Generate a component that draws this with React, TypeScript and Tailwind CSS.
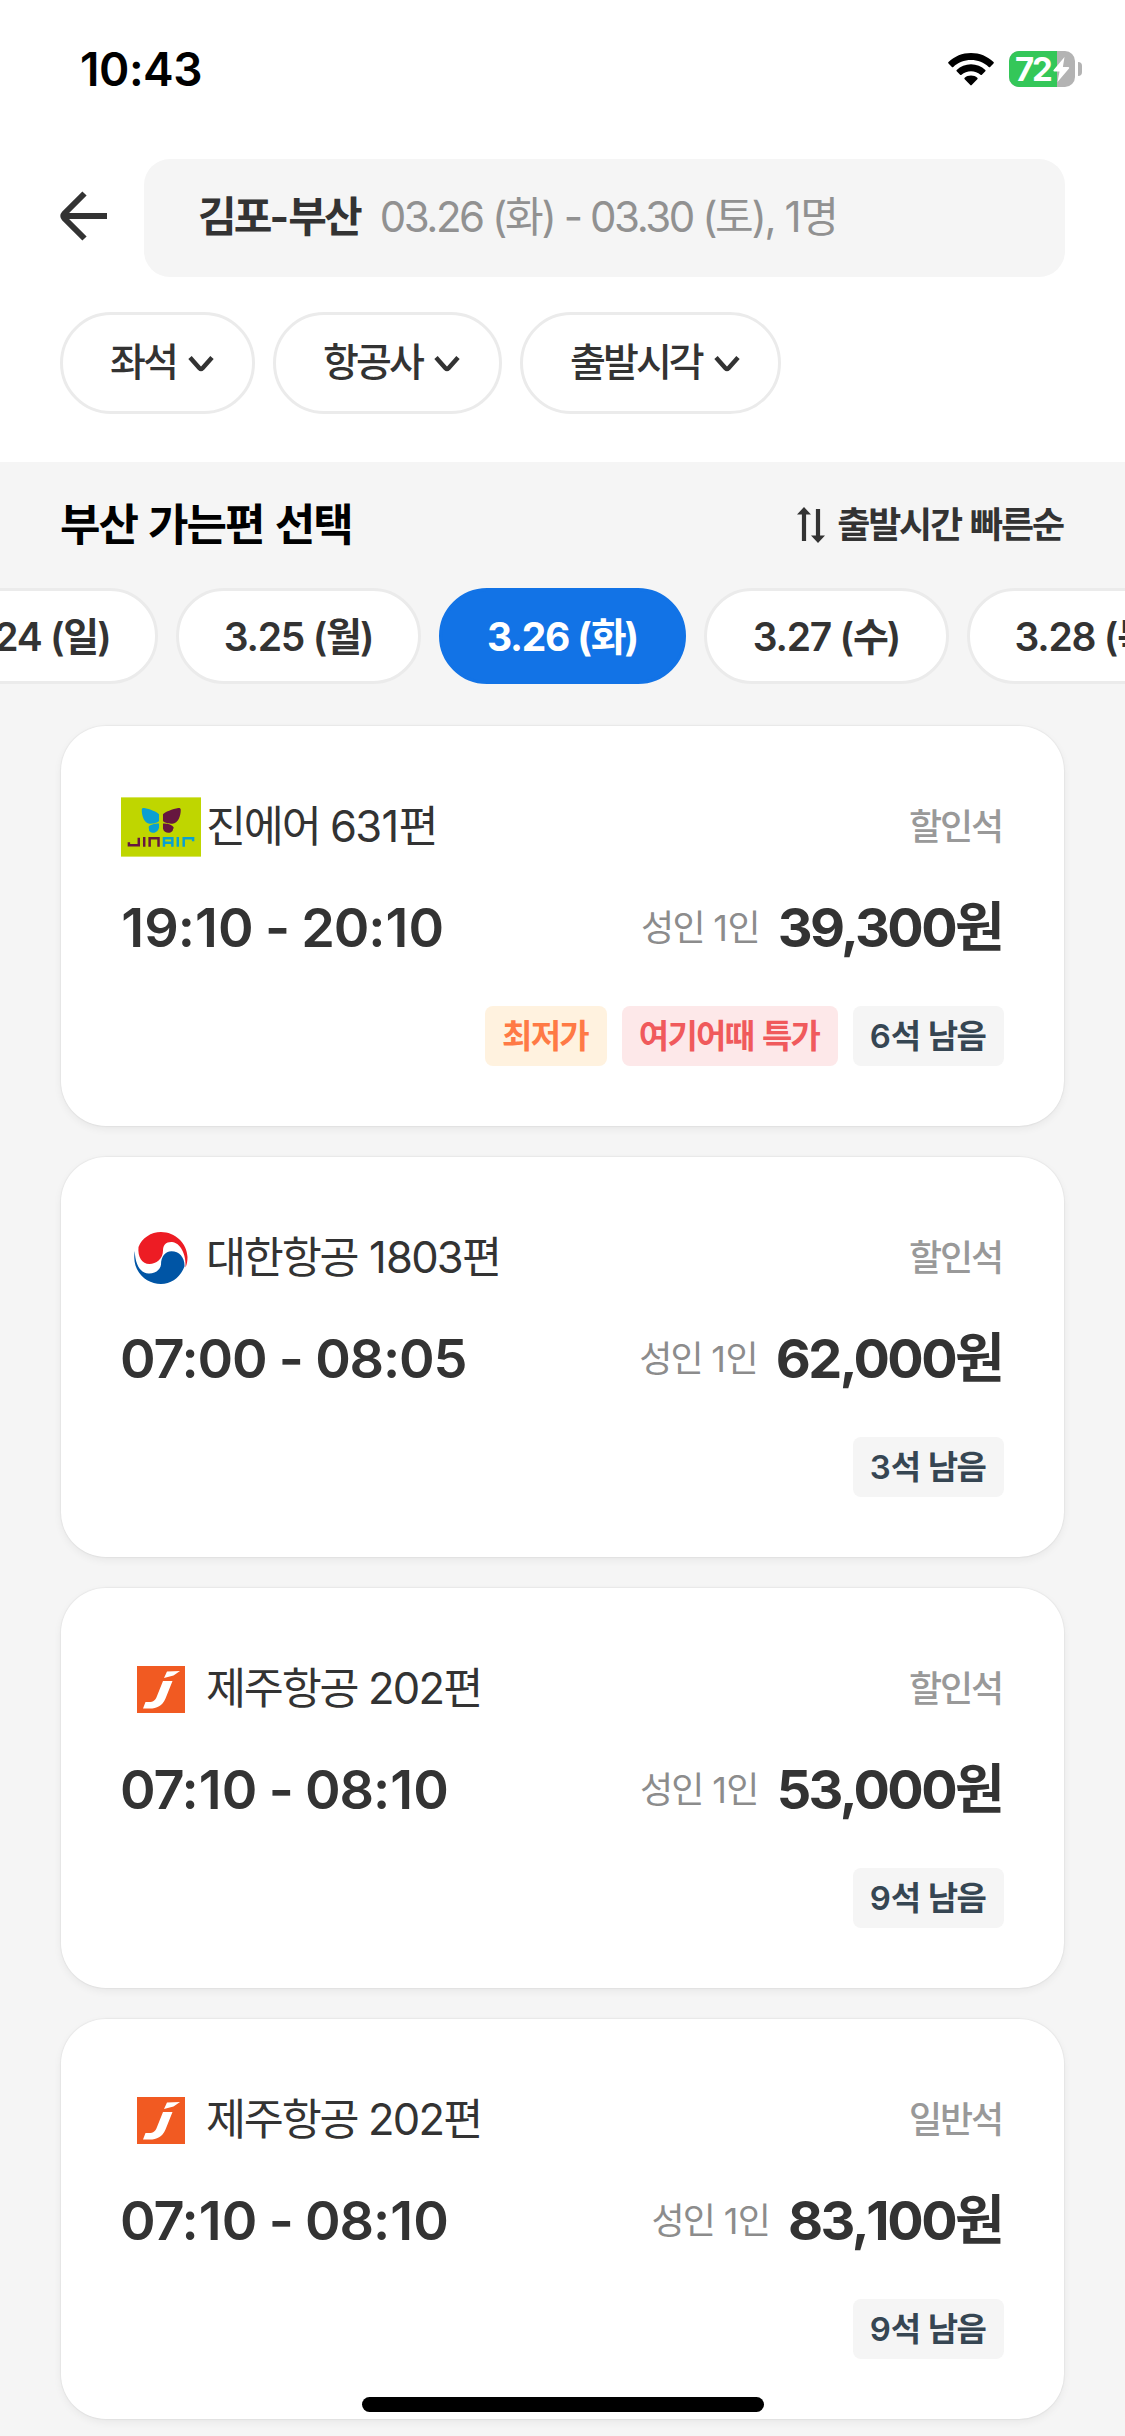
import type { ReactNode } from "react";
import clsx from "clsx";

type Badge = { label: string; tone: "lowest" | "deal" | "seats" };

type Flight = {
  carrier: "jinair" | "koreanair" | "jejuair";
  name: string;
  time: string;
  price: string;
  seatClass: string;
  badges: Badge[];
};

const flights: Flight[] = [
  {
    carrier: "jinair",
    name: "진에어 631편",
    time: "19:10 - 20:10",
    price: "39,300원",
    seatClass: "할인석",
    badges: [
      { label: "최저가", tone: "lowest" },
      { label: "여기어때 특가", tone: "deal" },
      { label: "6석 남음", tone: "seats" },
    ],
  },
  {
    carrier: "koreanair",
    name: "대한항공 1803편",
    time: "07:00 - 08:05",
    price: "62,000원",
    seatClass: "할인석",
    badges: [{ label: "3석 남음", tone: "seats" }],
  },
  {
    carrier: "jejuair",
    name: "제주항공 202편",
    time: "07:10 - 08:10",
    price: "53,000원",
    seatClass: "할인석",
    badges: [{ label: "9석 남음", tone: "seats" }],
  },
  {
    carrier: "jejuair",
    name: "제주항공 202편",
    time: "07:10 - 08:10",
    price: "83,100원",
    seatClass: "일반석",
    badges: [{ label: "9석 남음", tone: "seats" }],
  },
];

const filters = [
  { label: "좌석", width: "w-[195px]" },
  { label: "항공사", width: "w-[229px]" },
  { label: "출발시각", width: "w-[261px]" },
];

const dates = ["3.24 (일)", "3.25 (월)", "3.26 (화)", "3.27 (수)", "3.28 (목)"];
const selectedDate = "3.26 (화)";

type TxtProps = {
  children: string;
  className?: string;
  hangul?: string;
  one?: string;
};

// Hangul is set tighter than the digits around it, and a "1" gets a little air
function Txt({ children, className, hangul = "tracking-[-0.05em]", one = "mx-[0.025em]" }: TxtProps) {
  return (
    <span className={clsx("whitespace-pre", className)}>
      {children.split(/([가-힣]+|1)/).map((part, i) => {
        if (i % 2 === 0) return part;
        return (
          <span key={i} className={part === "1" ? one : hangul}>
            {part}
          </span>
        );
      })}
    </span>
  );
}

function WifiIcon() {
  return (
    <svg width="46" height="33" viewBox="0 0 46 33" fill="black">
      <path d="M23 0C31.600 0 39.600 3.300 45.500 9.100a1 1 0 0 1 0 1.400L42.100 13.900a1 1 0 0 1-1.400 0C36 9.500 29.700 7 23 7S10 9.500 5.300 13.900a1 1 0 0 1-1.400 0L.5 10.500a1 1 0 0 1 0-1.400C6.400 3.300 14.400 0 23 0Z" />
      <path d="M23 11.300c5.500 0 10.500 2.100 14.300 5.600a1 1 0 0 1 0 1.400l-3.400 3.400a1 1 0 0 1-1.400 0C29.900 19.500 26.600 18.200 23 18.200s-6.900 1.300-9.500 3.500a1 1 0 0 1-1.400 0l-3.400-3.400a1 1 0 0 1 0-1.400C12.500 13.400 17.500 11.300 23 11.300Z" />
      <path d="M23 22.500c2.500 0 4.700.9 6.300 2.300a1 1 0 0 1 0 1.500L23.700 32.100a1 1 0 0 1-1.400 0L16.700 26.300a1 1 0 0 1 0-1.500c1.600-1.400 3.800-2.300 6.300-2.300Z" />
    </svg>
  );
}

function Battery() {
  return (
    <div className="flex items-center">
      <div className="relative flex h-9 w-[66px] items-center rounded-[10px] bg-[#b3b3b3]">
        <div className="absolute inset-y-0 left-0 w-12 rounded-l-[10px] bg-[#34c759]" />
        <span className="relative ml-[6px] text-[33px] leading-9 font-bold tracking-[-0.07em] text-white">72</span>
        <svg className="absolute top-[6px] left-[44px]" width="17" height="25" viewBox="0 0 17 25" fill="white">
          <path d="M11.500 0 .6 13.100c-.5.7-.1 1.500.7 1.500h5.200L4.500 25 16 11.500c.5-.7.100-1.500-.7-1.500H9.900Z" />
        </svg>
      </div>
      <div className="ml-[3px] h-[14px] w-1 rounded-r-full bg-[#b3b3b3]" />
    </div>
  );
}

function StatusBar() {
  return (
    <div className="flex h-[138px] items-center justify-between pr-[43px] pl-[80px]">
      <span className="text-[46px] leading-none font-semibold tracking-[-0.01em] text-black">10:43</span>
      <div className="flex items-center gap-[15px]">
        <WifiIcon />
        <Battery />
      </div>
    </div>
  );
}

function SearchHeader() {
  return (
    <div className="mt-[21px] flex h-[118px] items-center px-[60px]">
      <svg className="mb-1" width="48" height="50" viewBox="0 0 48 50" fill="none" stroke="#333" strokeWidth="6">
        <path d="M24.500 2.500 4.500 22.500Q2.300 25 4.500 27.500L24.500 47.500M3.500 25H47" />
      </svg>
      <div className="ml-9 flex h-full flex-1 items-center rounded-[26px] bg-[#f5f5f5] pb-[3px] pl-[54px] text-[42px] leading-none">
        <Txt className="font-bold tracking-[-0.02em] text-[#333]" hangul="tracking-[-0.07em]">
          김포-부산
        </Txt>
        <Txt className="ml-5 font-normal tracking-[-0.058em] text-[#919191]">03.26 (화) - 03.30 (토), 1명</Txt>
      </div>
    </div>
  );
}

function FilterBar() {
  return (
    <div className="mt-[35px] flex gap-[18px] pl-[60px]">
      {filters.map((f) => (
        <button
          key={f.label}
          className={clsx(
            "flex h-[102px] items-center rounded-full border-[3px] border-[#ebebeb] bg-white pb-[3px] pl-[47px]",
            f.width,
          )}
        >
          <Txt className="text-[39px] leading-none font-medium text-[#333]" hangul="tracking-[-0.075em]">
            {f.label}
          </Txt>
          <svg className="mt-[5px] ml-3" width="26" height="18" viewBox="0 0 26 18" fill="none" stroke="#333" strokeWidth="4.500">
            <path d="M2 2.500 11.500 13.200q1.500 1.500 3 0L24 2.500" />
          </svg>
        </button>
      ))}
    </div>
  );
}

function SortIcon() {
  return (
    <svg width="28" height="36" viewBox="0 0 28 36" fill="#333">
      <path d="M7 0 14 7.500H9.100V34H4.900V7.500H0ZM21 36l-7-7.500h4.900V2h4.200V28.500H28Z" />
    </svg>
  );
}

function DateTabs() {
  return (
    <div className="mt-8 flex h-24 justify-center gap-[18px] overflow-hidden">
      {dates.map((date) => (
        <button
          key={date}
          className={clsx(
            "flex h-24 shrink-0 items-center justify-center rounded-full border-[3px]",
            date === selectedDate
              ? "w-[247px] border-[#1273e6] bg-[#1273e6] text-white"
              : "w-[245px] border-[#ebebeb] bg-white text-[#333]",
          )}
        >
          <Txt
            className={clsx(
              "text-[39px] leading-none tracking-[-0.032em]",
              date === selectedDate ? "font-bold" : "font-semibold",
            )}
          >
            {date}
          </Txt>
        </button>
      ))}
    </div>
  );
}

function JinAirLogo() {
  return (
    <svg width="81" height="60" viewBox="0 0 81 60">
      <rect width="81" height="60" fill="#bfd600" />
      <path d="M21 12.500c0-1.500 1-2 2.500-1.800C29 11.500 37 15 38.500 17v7c-1 1.500-6 3-9.500 2.600C23.500 26 21 19 21 12.500Z" fill="#0aa0d2" />
      <path d="M38.500 26.500v4c-.500 3-3 5.300-5.500 5.300-3 0-5-1.500-4.600-3.300L28 30c.5-2 6-3.500 10.500-3.500Z" fill="#0aa0d2" />
      <path d="M60.500 12.500c0-1.500-1-2-2.500-1.800C52.500 11.500 44 15 42.500 17v7c1 1.500 6 3 9.500 2.600C58 26 60.500 19 60.500 12.500Z" fill="#66173f" />
      <path d="M42.500 26.500v5c.5 3 3 4.300 5.500 4.300 3 0 5-2 4.600-3.800L53.500 31c-.5-3-6.500-4.500-11-4.500Z" fill="#66173f" />
      <g fill="none" strokeWidth="2.500">
        <path d="M18 41v7.500H8v-3M23.500 40v10M29 50v-8.500h9V50" stroke="#66173f" />
        <path d="M43.500 50v-8.500h8.500V50M44 46h8M57.500 40v10M63.500 50v-8.500H73v3" stroke="#0aa0d2" />
      </g>
    </svg>
  );
}

function KoreanAirLogo() {
  return (
    <svg width="54" height="52" viewBox="0 0 54 52">
      <path d="M4.500 15C8 6 17 0 27 0c14 0 26 11 26.500 25 0 4-.5 7-2 10.500C52.500 22 46 10.500 38 10c-6-.3-9 3-9 8.500C29 27 22 32 15.500 32 8 32 3.500 25 4.500 15Z" fill="#ed1c24" />
      <path d="M.8 19C1 31 5.500 41 14.500 41.500c7 .3 12-4 12.500-9C27 25 31 19.300 37.500 19.300 45.500 19.300 51 26 50.500 34.500 46.500 45 37.500 52 27 52 13 52 .5 41 .3 26c0-2.500.1-5 .5-7Z" fill="#0055a5" />
    </svg>
  );
}

function JejuAirLogo() {
  return (
    <svg width="48" height="47" viewBox="0 0 48 47">
      <rect width="48" height="47" fill="#f15a22" />
      <path d="M30 5.500 43 5 36.500 9.500 27 12Z" fill="white" />
      <path d="M26 15h9.500L28.500 32.500C25.500 40 19.500 42.500 13 42.500H6L8.500 36H12c4.500 0 6.500-2 8-6Z" fill="white" />
    </svg>
  );
}

const logos: Record<Flight["carrier"], ReactNode> = {
  jinair: <JinAirLogo />,
  koreanair: <KoreanAirLogo />,
  jejuair: <JejuAirLogo />,
};

const badgeTone: Record<Badge["tone"], string> = {
  lowest: "bg-[#fff2df] text-[#ff7a45] w-[122px]",
  deal: "bg-[#fde8e9] text-[#f05a5c] w-[216px]",
  seats: "bg-[#f5f5f5] text-[#364653] w-[151px]",
};

function FlightCard({ flight }: { flight: Flight }) {
  return (
    <div className="h-[400px] rounded-[45px] bg-white px-[60px] pt-[71px] text-[#333] shadow-[0_0_1px_1px_rgba(0,0,0,0.04),0_3px_9px_rgba(0,0,0,0.06)]">
      <div className="flex h-[60px] items-center justify-between">
        <div className="flex items-center">
          <div className="flex w-[81px] justify-center pr-px">{logos[flight.carrier]}</div>
          <Txt className="ml-1 text-[43.500px] leading-none font-normal tracking-[-0.04em]">{flight.name}</Txt>
        </div>
        <Txt className="mr-[2px] text-[36px] leading-none font-medium text-[#999]" hangul="tracking-[-0.06em]">
          {flight.seatClass}
        </Txt>
      </div>
      <div className="mt-[34px] flex h-[74px] items-center justify-between">
        <Txt className="-ml-px text-[54px] leading-none font-semibold tracking-[-0.022em]">{flight.time}</Txt>
        <div className="flex items-center pr-[2px]">
          <Txt className="mr-[19px] text-[36px] leading-none font-normal tracking-[-0.04em] text-[#8c8c8c]">
            성인 1인
          </Txt>
          <Txt className="text-[54px] leading-none font-bold tracking-[-0.048em]" one="mr-[0.01em] -ml-[0.02em]">
            {flight.price}
          </Txt>
        </div>
      </div>
      <div className="mt-[41px] flex justify-end gap-[15px]">
        {flight.badges.map((badge) => (
          <div
            key={badge.label}
            className={clsx("flex h-[60px] items-center justify-center rounded-lg pr-[2px]", badgeTone[badge.tone])}
          >
            <Txt className="text-[33px] leading-none font-semibold">{badge.label}</Txt>
          </div>
        ))}
      </div>
    </div>
  );
}

export default function App() {
  return (
    <div className="relative h-[2436px] w-[1125px] overflow-hidden bg-white font-['Inter','Noto_Sans_CJK_KR',sans-serif]">
      <StatusBar />
      <SearchHeader />
      <FilterBar />
      <main className="mt-12 h-[1974px] bg-[#f5f5f5] pt-[31px]">
        <div className="flex h-[63px] items-center justify-between pr-[62px] pl-[60px]">
          <Txt className="text-[44px] leading-none font-semibold text-black" hangul="tracking-[-0.045em]">
            부산 가는편 선택
          </Txt>
          <div className="flex items-center gap-3">
            <SortIcon />
            <Txt className="text-[36px] leading-none font-semibold text-[#333]" hangul="tracking-[-0.06em]">
              출발시간 빠른순
            </Txt>
          </div>
        </div>
        <DateTabs />
        <div className="mt-[42px] flex flex-col gap-[31px] px-[61px]">
          {flights.map((flight, i) => (
            <FlightCard key={i} flight={flight} />
          ))}
        </div>
      </main>
      {/* home indicator */}
      <div className="absolute top-[2397px] left-[362px] h-[15px] w-[402px] rounded-full bg-black" />
    </div>
  );
}
